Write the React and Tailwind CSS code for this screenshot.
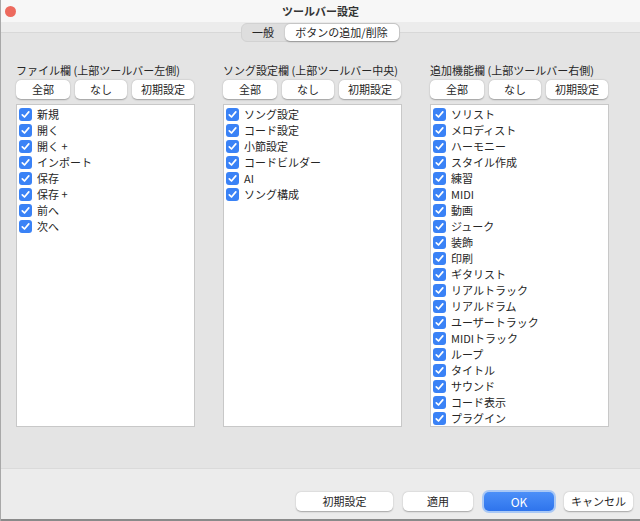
import React from "react";

const font = { fontFamily: '"Noto Sans CJK JP", "Noto Sans", sans-serif' };

const columns = [
  {
    title: "ファイル欄 (上部ツールバー左側)",
    items: ["新規", "開く", "開く +", "インポート", "保存", "保存 +", "前へ", "次へ"],
  },
  {
    title: "ソング設定欄 (上部ツールバー中央)",
    items: ["ソング設定", "コード設定", "小節設定", "コードビルダー", "AI", "ソング構成"],
  },
  {
    title: "追加機能欄 (上部ツールバー右側)",
    items: [
      "ソリスト",
      "メロディスト",
      "ハーモニー",
      "スタイル作成",
      "練習",
      "MIDI",
      "動画",
      "ジューク",
      "装飾",
      "印刷",
      "ギタリスト",
      "リアルトラック",
      "リアルドラム",
      "ユーザートラック",
      "MIDIトラック",
      "ループ",
      "タイトル",
      "サウンド",
      "コード表示",
      "プラグイン",
    ],
  },
];

function Btn({ children, className = "" }) {
  return (
    <div
      className={`h-[19px] flex items-center justify-center bg-white rounded-[5px] text-[11px] leading-none text-[#262626] shadow-[0_0.5px_1.5px_rgba(0,0,0,0.3)] ${className}`}
    >
      {children}
    </div>
  );
}

function Check() {
  return (
    <div className="w-[13px] h-[13px] rounded-[3px] bg-[#3a82f6] flex items-center justify-center shrink-0">
      <svg width="13" height="13" viewBox="0 0 13 13">
        <path d="M3.3 6.8 L5.5 9 L9.8 3.9" fill="none" stroke="white" strokeWidth="1.7" strokeLinecap="round" strokeLinejoin="round" />
      </svg>
    </div>
  );
}

function Column({ title, items }) {
  return (
    <div className="w-[179px] flex flex-col">
      <div className="h-[14px] text-[11px] leading-[14px] text-[#262626] whitespace-nowrap">{title}</div>
      <div className="flex gap-[5px] mt-[3px] pr-[1px]">
        <Btn className="w-[54px]">全部</Btn>
        <Btn className="w-[52px]">なし</Btn>
        <Btn className="w-[62px]">初期設定</Btn>
      </div>
      <div className="mt-[5px] h-[323px] bg-white border border-[#c8c8c8] overflow-hidden pt-[1px] pl-[2px]">
        {items.map((it) => (
          <div key={it} className="h-[16px] flex items-center gap-[5px]">
            <Check />
            <span className="text-[11px] leading-none text-[#262626] whitespace-nowrap">{it}</span>
          </div>
        ))}
      </div>
    </div>
  );
}

export default function App() {
  return (
    <div className="w-[640px] h-[521px] flex flex-col overflow-hidden border-l border-[#a8a8a8] bg-[#ececec]" style={font}>
      <div className="h-[22px] shrink-0 bg-[#f7f7f7] flex items-center relative">
        <div className="w-[11px] h-[11px] rounded-full bg-[#ed6a5e] ml-[4px]" />
        <div className="flex-1 text-center text-[11px] font-bold text-[#333] leading-none pr-[15px]">ツールバー設定</div>
      </div>
      <div className="pt-[1px] flex justify-center relative z-10">
        <div className="h-[19px] flex items-center rounded-[6px] bg-[#dedede] border border-[#d2d2d2] p-[0px] ml-[-1px]">
          <div className="w-[43px] h-full flex items-center justify-center text-[11px] leading-none text-[#262626]">一般</div>
          <div className="w-[114px] h-[17px] flex items-center justify-center bg-white rounded-[5px] shadow-[0_0.5px_1.5px_rgba(0,0,0,0.3)] text-[11px] leading-none text-[#262626]">
            ボタンの追加/削除
          </div>
        </div>
      </div>
      <div className="-mt-[10px] h-[436px] shrink-0 bg-[#e4e4e4] border-t border-[#d8d8d8] flex gap-[28px] pl-[15px] pt-[30px]">
        {columns.map((c) => (
          <Column key={c.title} {...c} />
        ))}
      </div>
      <div className="flex-1 bg-[#ececec] border-t border-[#dadada] border-b-2 border-b-[#8a8a8a] flex justify-end items-start pt-[23px] pr-[7px]">
        <Btn className="w-[97px]">初期設定</Btn>
        <Btn className="w-[70px] ml-[10px]">適用</Btn>
        <div className="ml-[9px] -mt-[2px] p-[2px] rounded-[7px] bg-[#a9c8f5]">
          <div className="w-[70px] h-[19px] rounded-[5px] bg-gradient-to-b from-[#4b8ff8] to-[#2f74ec] flex items-center justify-center text-[12px] leading-none text-white">
            OK
          </div>
        </div>
        <Btn className="w-[69px] ml-[8px]">キャンセル</Btn>
      </div>
    </div>
  );
}
